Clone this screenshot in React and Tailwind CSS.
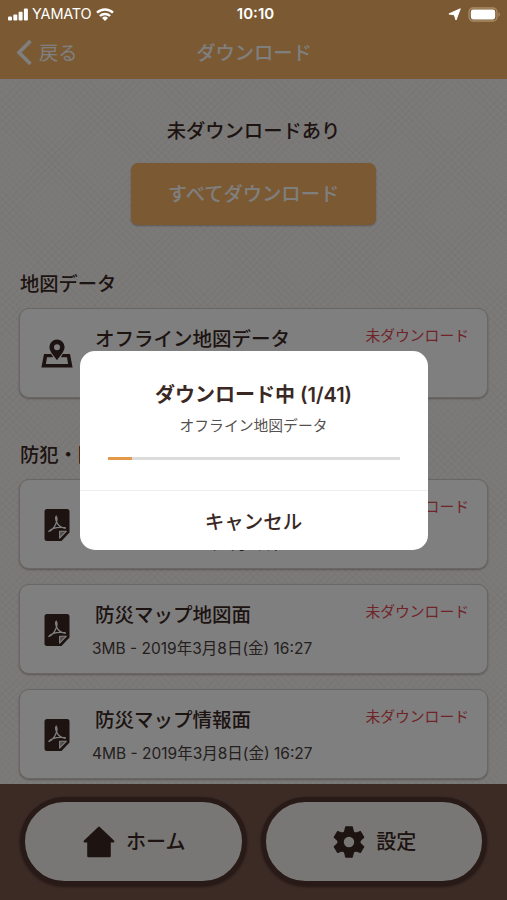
const sections = [
    {
        title: "地図データ",
        items: [{ id: 1, icon: "map", name: "オフライン地図データ", info: "" }],
    },
    {
        title: "防犯・防災",
        items: [
            { id: 2, icon: "pdf", name: "防犯マップ", info: "10.53MB - 2019年3月8日(金) 16:27" },
            { id: 3, icon: "pdf", name: "防災マップ地図面", info: "3MB - 2019年3月8日(金) 16:27" },
            { id: 4, icon: "pdf", name: "防災マップ情報面", info: "4MB - 2019年3月8日(金) 16:27" },
        ],
    },
];

const teeth = [0, 60, 120, 180, 240, 300];

function MapIcon() {
    return (
        <svg width="32" height="30" viewBox="0 0 32 30" fill="currentColor">
            <path
                fillRule="evenodd"
                d="M16 .5a7.600 7.600 0 0 1 7.600 7.600C23.600 12.500 19 17 16 21.200 13 17 8.400 12.500 8.400 8.100A7.600 7.600 0 0 1 16 .5Zm0 4.700a3 3 0 1 0 0 6 3 3 0 0 0 0-6Z"
            />
            <path
                fillRule="evenodd"
                d="M3 15h7.200l2 3.200H6L4.900 25h22.200L26 18.200h-6.200l2-3.200H29l2.600 13.500H.4Z"
            />
        </svg>
    );
}

function PdfIcon() {
    return (
        <svg width="26" height="32" viewBox="0 0 26 32" fill="none">
            <path
                fill="currentColor"
                d="M3 0h20a2.500 2.500 0 0 1 2.500 2.500V23.500L17.500 32H3a2.500 2.500 0 0 1-2.500-2.500v-27A2.500 2.500 0 0 1 3 0Z"
            />
            <path d="M15.600 22.200h6.800l-6.800 7Z" fill="#a49c99" stroke="#fff" strokeWidth="1.100" strokeLinejoin="round" />
            <path
                d="M12.300 7.300c-1.100 1.100-.5 3.900.3 5.700 1.300 3 4.100 5.800 8.600 6.300M12.300 7.300c1.200 1.800.8 4.200-.1 6.600-1.400 3.700-4 7.200-7.300 8.600M5 22.300c2.600-2.800 8-4.700 16.200-3.600"
                stroke="#fff"
                strokeWidth="1.300"
                strokeLinecap="round"
            />
        </svg>
    );
}

function HomeIcon() {
    return (
        <svg width="32" height="32" viewBox="0 0 32 32" fill="currentColor">
            <path
                stroke="currentColor"
                strokeLinejoin="round"
                strokeWidth="2.400"
                d="M16 1.800 30.200 15.400h-3.600v14.600H5.400V15.400H1.800Z"
            />
        </svg>
    );
}

function GearIcon() {
    return (
        <svg width="32" height="32" viewBox="-16 -16 32 32" fill="currentColor">
            <circle r="8.400" fill="none" stroke="currentColor" strokeWidth="6.400" />
            {teeth.map(angle => (
                <path
                    key={angle}
                    transform={`rotate(${angle})`}
                    stroke="currentColor"
                    strokeLinejoin="round"
                    d="M-3.400-15.200h6.800l1.200 5.400h-9.200Z"
                />
            ))}
        </svg>
    );
}

function StatusBar() {
    return (
        <div className="absolute inset-x-0 top-0 z-20 grid h-7 grid-cols-3 items-center pl-2 pr-1.5 text-white">
            <div className="flex items-center">
                <svg width="20" height="13" viewBox="0 0 20 13" fill="currentColor">
                    <rect x="0" y="8.500" width="4" height="4" rx="1" />
                    <rect x="5.300" y="6.500" width="4" height="6" rx="1" />
                    <rect x="10.600" y="3.800" width="4" height="8.700" rx="1" />
                    <rect x="15.900" y="0.500" width="4" height="12" rx="1" />
                </svg>
                <span className="ml-1 text-[14.500px] tracking-[-0.2px]">YAMATO</span>
                <svg className="ml-[5px]" width="18" height="13" viewBox="0 0 18 13" fill="none" stroke="currentColor" strokeWidth="2.400">
                    <path d="M1 4.700a11.500 11.500 0 0 1 16 0" />
                    <path d="M3.900 8a7.400 7.400 0 0 1 10.200 0" />
                    <path d="M9 13 6 10a4.300 4.300 0 0 1 6 0Z" fill="currentColor" stroke="none" />
                </svg>
            </div>
            <span className="pl-0.5 text-center text-[15px] font-semibold">10:10</span>
            <div className="flex items-center justify-end gap-[7px]">
                <svg width="13" height="13" viewBox="0 0 13 13" fill="currentColor">
                    <path stroke="currentColor" strokeLinejoin="round" d="M12.300.8 8 12 6.300 6.900.9 5.900Z" />
                </svg>
                <svg width="33" height="15" viewBox="0 0 33 15">
                    <rect x="1" y="1" width="28" height="13" rx="4" fill="none" stroke="#a98c66" strokeWidth="1.300" />
                    <rect x="2.800" y="2.600" width="24.400" height="9.800" rx="2.300" fill="#fff" />
                    <path d="M30.500 5.200c1.800.7 1.800 3.900 0 4.600Z" fill="#a98c66" />
                </svg>
            </div>
        </div>
    );
}

function DownloadCard({ item }) {
    return (
        <div className="flex h-[90px] w-[469px] rounded-[10px] border border-[#d2cfcd] bg-white shadow-[0_1px_2px_rgba(60,40,30,0.35)]">
            <div className="flex w-[72px] items-center justify-center pt-0.5 pl-0.5">
                {item.icon === "map" ? <MapIcon /> : <PdfIcon />}
            </div>
            <div className="flex-1 pt-[15px]">
                <div className="flex items-start justify-between pr-[18px]">
                    <span className="pl-[3px] text-[19.500px] leading-[30px] font-medium">{item.name}</span>
                    <span className="text-[14.800px] leading-6 text-[#e04652]">未ダウンロード</span>
                </div>
                <p className="mt-[7px] text-[15.500px] leading-6 text-[#4a403c]">{item.info}</p>
            </div>
        </div>
    );
}

function TabButton({ icon, label }) {
    return (
        <button className="flex h-[89px] flex-1 items-center justify-center gap-[11px] rounded-full border-[5px] border-[#50362f] bg-[#f3efeb] pl-0.5 text-[20px] font-medium shadow-[0_1px_3px_rgba(30,10,5,0.5)]">
            {icon}
            <span>{label}</span>
        </button>
    );
}

function ProgressDialog({ current, total, name }) {
    return (
        <div className="absolute inset-0 z-10 flex items-center justify-center bg-black/50">
            <div className="flex h-[199px] w-[348px] flex-col rounded-[15px] bg-white text-center">
                <h2 className="mt-7 text-[20px] leading-8 font-semibold">
                    ダウンロード中 ({current}/{total})
                </h2>
                <p className="mt-[3px] text-[14.800px] leading-6 text-[#55504e]">{name}</p>
                <div className="mx-7 mt-[19px] h-[3px] bg-[#dcdcdc]">
                    <div className="h-full w-6 bg-[#e29a4a]" />
                </div>
                <button className="mt-[30px] flex-1 border-t border-[#eeeeee] pt-1.5 text-[19.500px] font-medium">
                    キャンセル
                </button>
            </div>
        </div>
    );
}

export default function App() {
    return (
        <div className="relative flex h-[900px] w-[507px] flex-col overflow-hidden bg-[#f8f5f2] font-['Inter','Noto_Sans_CJK_JP',sans-serif] text-[#3a2824]">
            <StatusBar />

            <header className="grid h-[79px] shrink-0 grid-cols-3 items-center bg-[#f6b264] pt-[27px] text-[19.300px] text-white">
                <div className="flex items-center gap-1.5 pl-4">
                    <svg width="17" height="26" viewBox="0 0 17 26" fill="none" stroke="currentColor" strokeWidth="3.600">
                        <path d="M14.500 1 3 12.500l11.500 11.500" />
                    </svg>
                    <span>戻る</span>
                </div>
                <h1 className="pl-px text-center font-medium">ダウンロード</h1>
            </header>

            <main className="min-h-0 flex-1 overflow-hidden bg-[repeating-linear-gradient(45deg,rgba(90,70,50,0.04)_0_1px,transparent_1px_5px),repeating-linear-gradient(-45deg,rgba(90,70,50,0.04)_0_1px,transparent_1px_5px)] pl-[19px]">
                <div className="flex w-[469px] flex-col items-center pt-9">
                    <p className="text-[19.300px] leading-8 font-medium">未ダウンロードあり</p>
                    <button className="mt-4 h-[62px] w-[245px] rounded-[7px] bg-[#f6b264] text-[19.300px] font-medium text-white shadow-[0_1px_2px_rgba(60,40,30,0.35)]">
                        すべてダウンロード
                    </button>
                </div>

                <div className="mt-[43px] flex flex-col gap-[41px]">
                    {sections.map(section => (
                        <section key={section.title}>
                            <h2 className="pl-px text-[19.300px] leading-8 font-medium">{section.title}</h2>
                            <div className="mt-2 flex flex-col gap-[15px]">
                                {section.items.map(item => (
                                    <DownloadCard key={item.id} item={item} />
                                ))}
                            </div>
                        </section>
                    ))}
                </div>
            </main>

            <footer className="flex h-[116px] shrink-0 gap-[14px] bg-[#78564b] px-5 pt-[13px]">
                <TabButton icon={<HomeIcon />} label="ホーム" />
                <TabButton icon={<GearIcon />} label="設定" />
            </footer>

            <ProgressDialog current={1} total={41} name="オフライン地図データ" />
        </div>
    );
}
